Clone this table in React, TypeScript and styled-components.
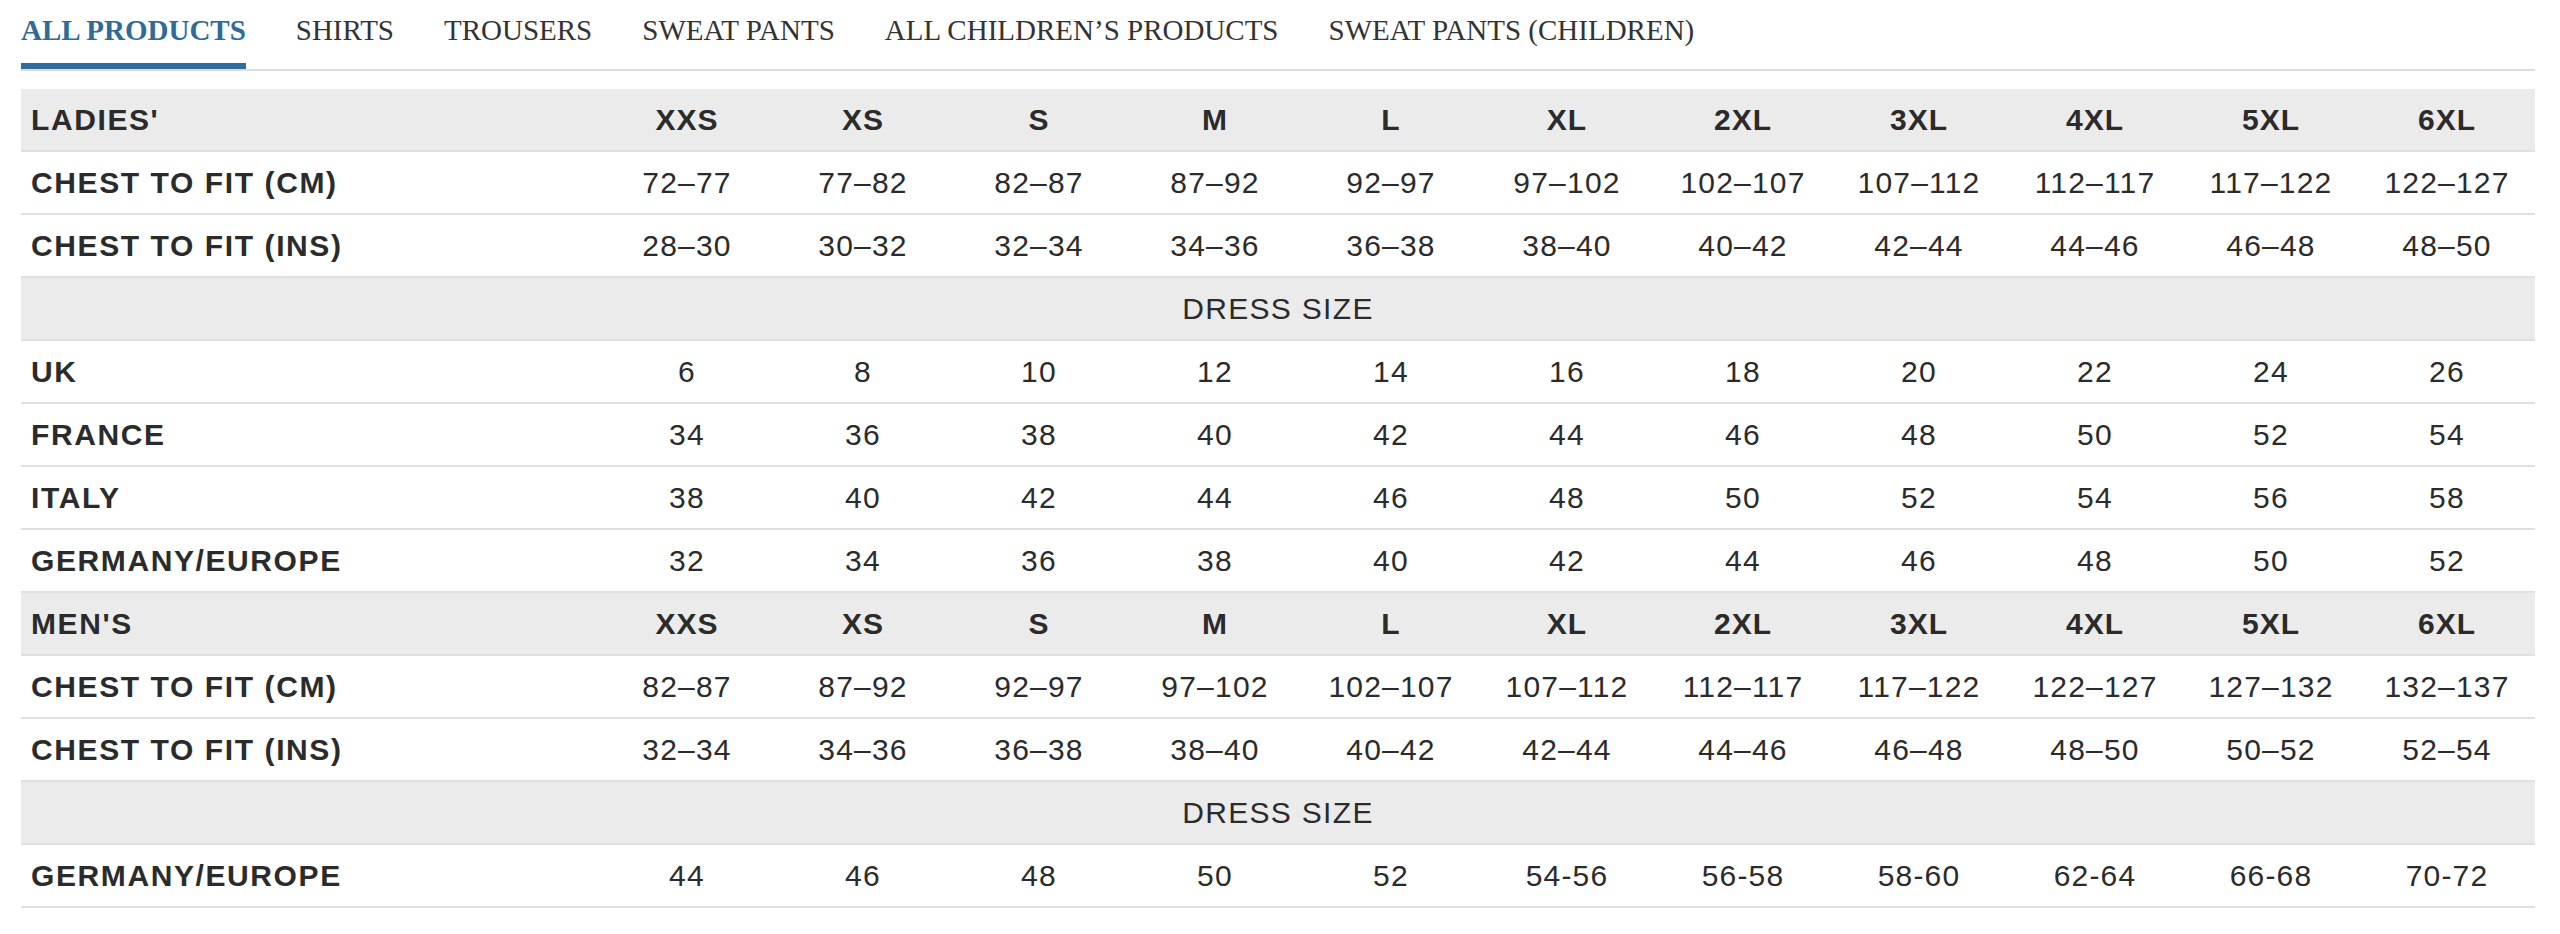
import React from "react";
import styled, { createGlobalStyle } from "styled-components";

const GlobalStyle = createGlobalStyle`
  html, body { margin: 0; padding: 0; background: #ffffff; }
  body { font-family: "Liberation Sans", Arial, sans-serif; }
`;

const Page = styled.div`
  padding: 0 25px 0 21px;
  box-sizing: border-box;
  width: 2560px;
`;

const TabBar = styled.nav`
  display: flex;
  gap: 50px;
  border-bottom: 2px solid #dcdcdc;
`;

const Tab = styled.a<{ $active?: boolean }>`
  display: block;
  padding: 14px 0 17px;
  line-height: 32px;
  font-family: "Liberation Serif", "Times New Roman", serif;
  font-size: 29px;
  font-weight: ${(p) => (p.$active ? 700 : 400)};
  color: ${(p) => (p.$active ? "#2f6b98" : "#333333")};
  border-bottom: 6px solid ${(p) => (p.$active ? "#2f6d9c" : "transparent")};
  white-space: nowrap;
  text-decoration: none;
  cursor: pointer;
`;

const Table = styled.div`
  margin-top: 18px;
  display: flex;
  flex-direction: column;
`;

const Row = styled.div<{ $shaded?: boolean }>`
  display: grid;
  grid-template-columns: 578px repeat(11, 1fr);
  height: 61px;
  align-items: center;
  background: ${(p) => (p.$shaded ? "#ebebeb" : "#ffffff")};
  border-bottom: 2px solid #e0e0e0;
  color: #2b2b2b;
  font-size: 30px;
`;

const Label = styled.div`
  padding-left: 10px;
  font-weight: 700;
  letter-spacing: 1.6px;
  white-space: nowrap;
`;

const Cell = styled.div<{ $bold?: boolean }>`
  text-align: center;
  font-weight: ${(p) => (p.$bold ? 700 : 400)};
  letter-spacing: ${(p) => (p.$bold ? "1px" : "1.2px")};
  white-space: nowrap;
`;

const SpanCell = styled.div`
  grid-column: 1 / -1;
  text-align: center;
  letter-spacing: 1.3px;
`;

type RowData = { label: string; values: string[]; header?: boolean } | { span: string };

const sizes = ["XXS", "XS", "S", "M", "L", "XL", "2XL", "3XL", "4XL", "5XL", "6XL"];
const seq = (start: number) => Array.from({ length: 11 }, (_, i) => String(start + i * 2));

const rows: RowData[] = [
  { label: "LADIES'", values: sizes, header: true },
  {
    label: "CHEST TO FIT (CM)",
    values: ["72–77", "77–82", "82–87", "87–92", "92–97", "97–102", "102–107", "107–112", "112–117", "117–122", "122–127"],
  },
  {
    label: "CHEST TO FIT (INS)",
    values: ["28–30", "30–32", "32–34", "34–36", "36–38", "38–40", "40–42", "42–44", "44–46", "46–48", "48–50"],
  },
  { span: "DRESS SIZE" },
  { label: "UK", values: seq(6) },
  { label: "FRANCE", values: seq(34) },
  { label: "ITALY", values: seq(38) },
  { label: "GERMANY/EUROPE", values: seq(32) },
  { label: "MEN'S", values: sizes, header: true },
  {
    label: "CHEST TO FIT (CM)",
    values: ["82–87", "87–92", "92–97", "97–102", "102–107", "107–112", "112–117", "117–122", "122–127", "127–132", "132–137"],
  },
  {
    label: "CHEST TO FIT (INS)",
    values: ["32–34", "34–36", "36–38", "38–40", "40–42", "42–44", "44–46", "46–48", "48–50", "50–52", "52–54"],
  },
  { span: "DRESS SIZE" },
  {
    label: "GERMANY/EUROPE",
    values: ["44", "46", "48", "50", "52", "54-56", "56-58", "58-60", "62-64", "66-68", "70-72"],
  },
];

const tabs = ["ALL PRODUCTS", "SHIRTS", "TROUSERS", "SWEAT PANTS", "ALL CHILDREN’S PRODUCTS", "SWEAT PANTS (CHILDREN)"];

export default function App() {
  return (
    <>
      <GlobalStyle />
      <Page>
        <TabBar>
          {tabs.map((t, i) => (
            <Tab key={t} $active={i === 0}>
              {t}
            </Tab>
          ))}
        </TabBar>
        <Table>
          {rows.map((r, i) =>
            "span" in r ? (
              <Row key={i} $shaded>
                <SpanCell>{r.span}</SpanCell>
              </Row>
            ) : (
              <Row key={i} $shaded={r.header}>
                <Label>{r.label}</Label>
                {r.values.map((v, j) => (
                  <Cell key={j} $bold={r.header}>
                    {v}
                  </Cell>
                ))}
              </Row>
            )
          )}
        </Table>
      </Page>
    </>
  );
}
